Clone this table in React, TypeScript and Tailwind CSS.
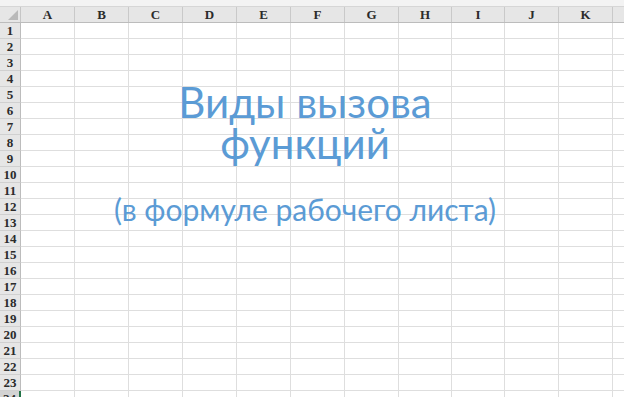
import React from 'react';

const cols = [
  { id: 'A', w: 54 },
  { id: 'B', w: 54 },
  { id: 'C', w: 54 },
  { id: 'D', w: 54 },
  { id: 'E', w: 54 },
  { id: 'F', w: 54 },
  { id: 'G', w: 54 },
  { id: 'H', w: 53 },
  { id: 'I', w: 53 },
  { id: 'J', w: 54 },
  { id: 'K', w: 54 },
  { id: '', w: 54 },
];

const rows = Array.from({ length: 24 }, (_, i) => i + 1);

const App: React.FC = () => {
  return (
    <div className="relative w-[624px] h-[397px] overflow-hidden bg-white">
      <div className="h-[7px] bg-[#f3f3f3] border-b border-[#d6d6d6]" />

      {/* column headers */}
      <div className="flex h-[16px] bg-[#e6e6e6] border-b border-[#bcbcbc]">
        <div className="relative w-[21px] shrink-0 border-r border-[#c6c6c6]">
          <div className="absolute right-[2px] bottom-[2px] w-0 h-0 border-l-[10px] border-l-transparent border-b-[10px] border-b-[#b9b9b9]" />
        </div>
        {cols.map((c, i) => (
          <div
            key={i}
            style={{ width: c.w }}
            className="shrink-0 flex items-center justify-center border-r border-[#c9c9c9] font-['Liberation_Serif',serif] text-[13px] font-bold text-[#2b2b2b]"
          >
            {c.id}
          </div>
        ))}
      </div>

      {/* rows */}
      {rows.map((r) => (
        <div key={r} className="flex h-[16px]">
          <div
            className={`w-[21px] shrink-0 flex items-center justify-center border-b border-[#d0d0d0] font-['Liberation_Serif',serif] text-[13px] font-bold text-[#2b2b2b] ${
              r === 24 ? 'bg-[#d3d3d3] border-r-2 border-r-[#217346]' : 'bg-[#e6e6e6] border-r border-r-[#bcbcbc]'
            }`}
          >
            {r}
          </div>
          {cols.map((c, i) => (
            <div
              key={i}
              style={{ width: c.w }}
              className="shrink-0 border-r border-b border-[#dedede]"
            />
          ))}
        </div>
      ))}

      {/* text box */}
      <div className="absolute left-[105px] top-[82px] w-[400px] flex flex-col items-center text-center text-[#5b9bd5] font-['Lato','Noto_Sans',sans-serif]">
        <div className="text-[42px] leading-[41px]">
          Виды вызова
          <br />
          функций
        </div>
        <div className="mt-[27px] text-[30px] leading-[36px]">(в формуле рабочего листа)</div>
      </div>
    </div>
  );
};

export default App;
